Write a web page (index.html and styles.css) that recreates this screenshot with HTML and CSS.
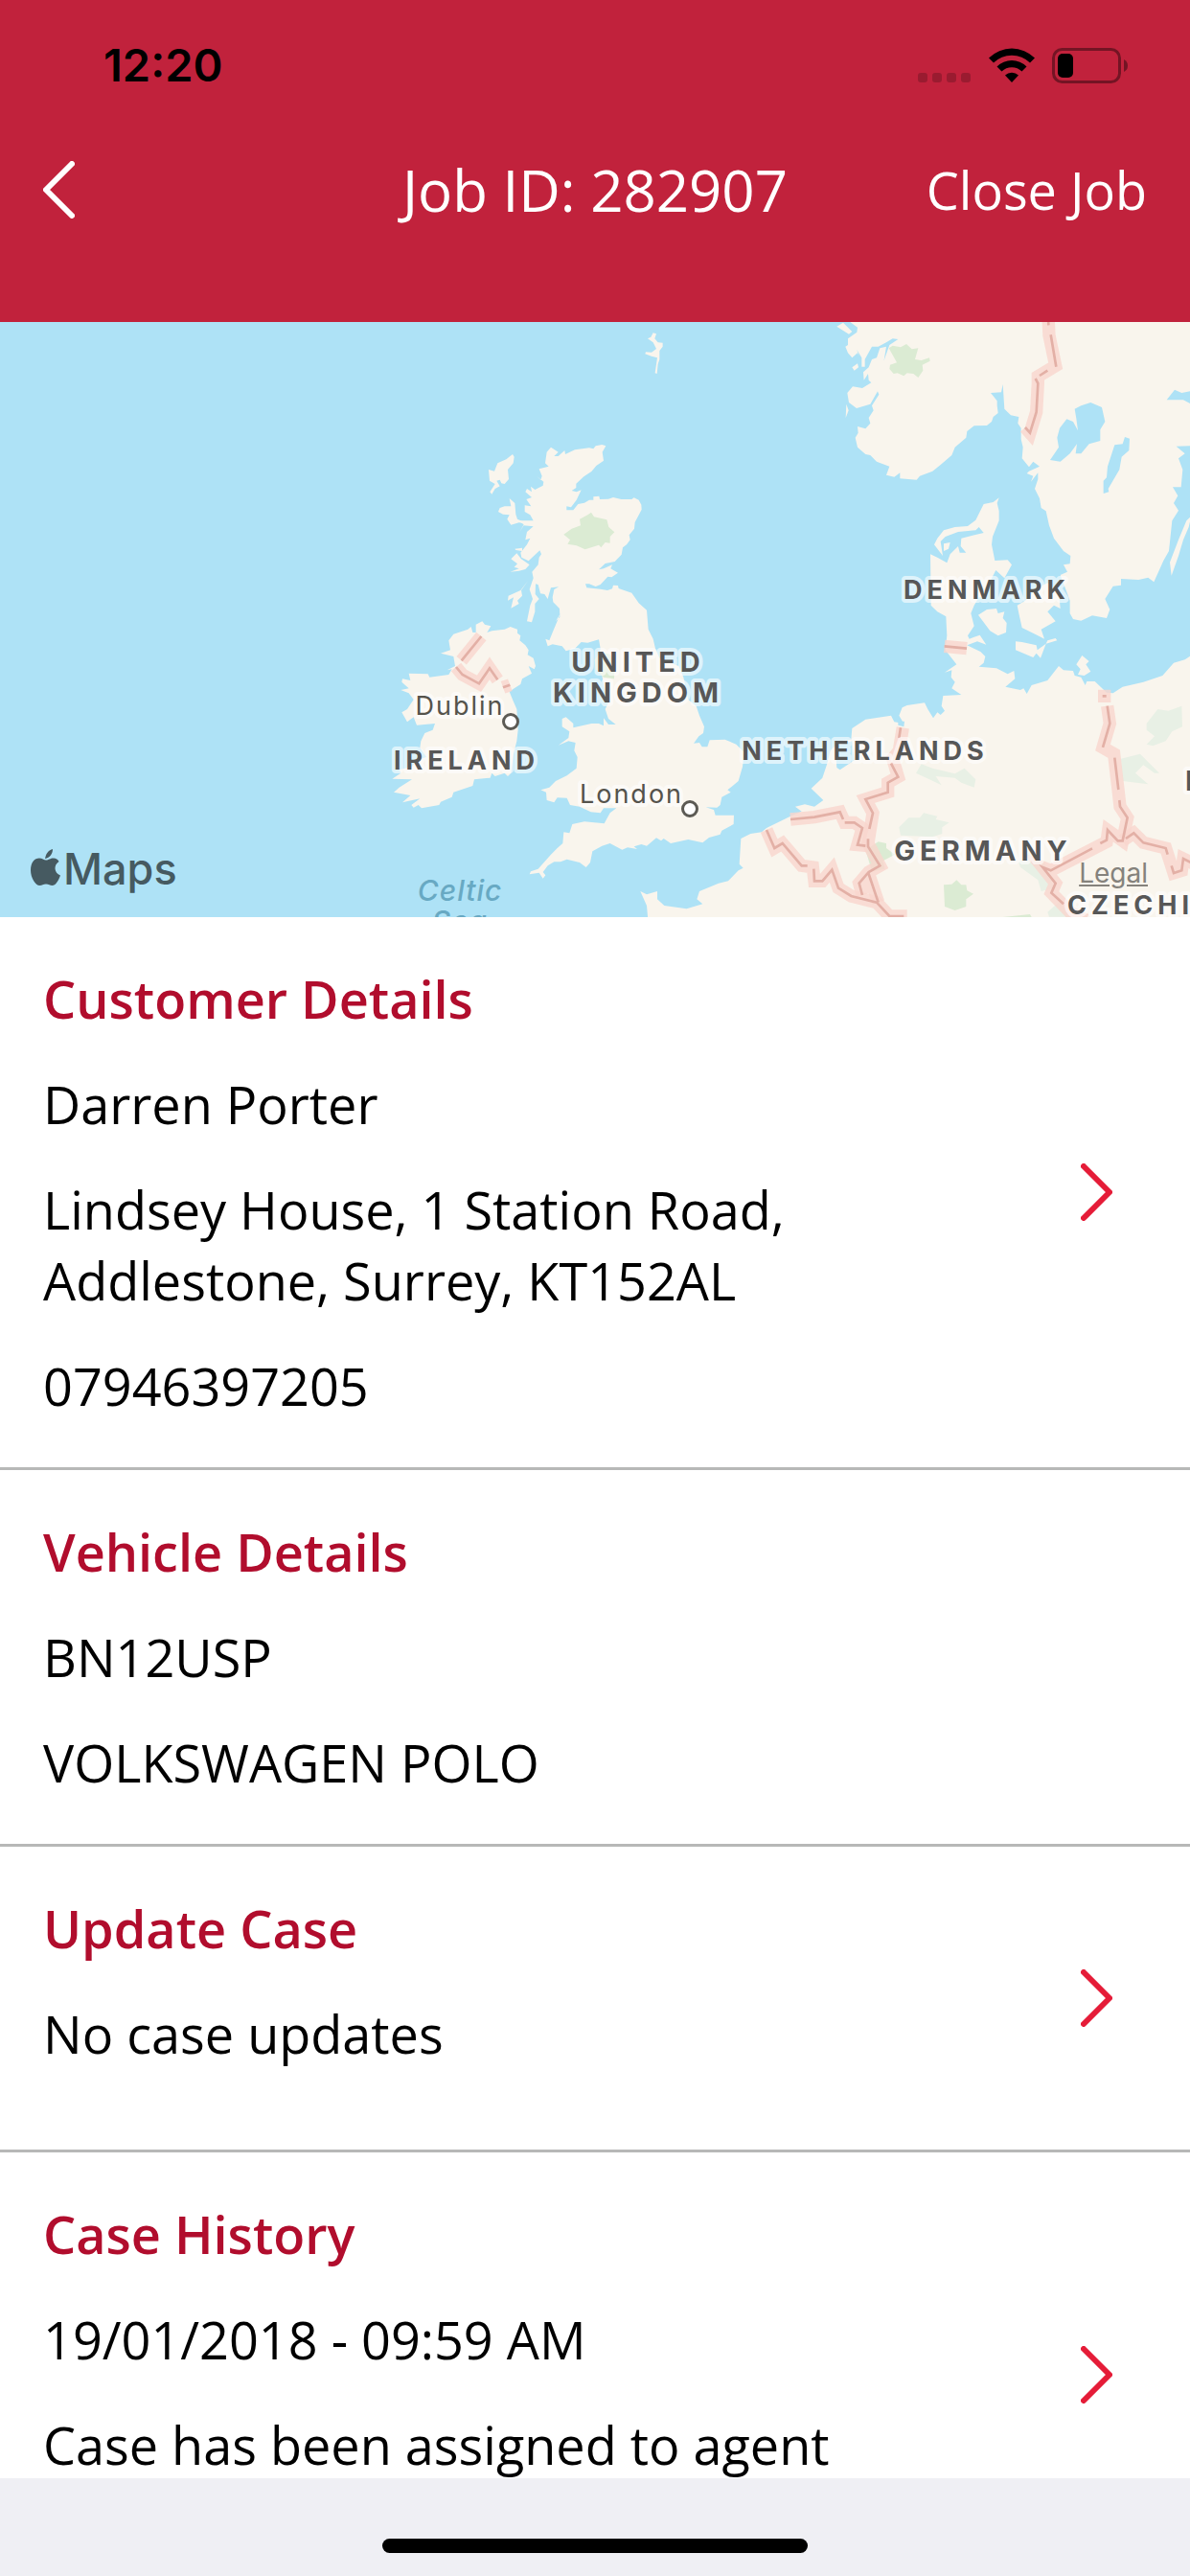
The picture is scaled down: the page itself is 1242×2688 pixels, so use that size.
FILE: index.html
```html
<!DOCTYPE html>
<html lang="en">
<head>
    <meta charset="utf-8">
    <meta name="viewport" content="width=device-width, initial-scale=1">
    <title>Job ID: 282907</title>
    <link rel="stylesheet" href="styles.css">
</head>
<body>
    <header class="header">
        <div class="status-bar">
            <span class="time">12:20</span>
            <div class="status-icons">
                <svg width="55" height="37" viewBox="0 0 55 37" fill="#000" fill-opacity=".2">
                    <rect x="0" y="26" width="10" height="10" rx="3"/>
                    <rect x="15" y="26" width="10" height="10" rx="3"/>
                    <rect x="30" y="26" width="10" height="10" rx="3"/>
                    <rect x="45" y="26" width="10" height="10" rx="3"/>
                </svg>
                <svg class="wifi" width="48" height="37" viewBox="0 0 48 37">
                    <path d="M0 10.5a34 34 0 0 1 48 0l-5 5a27 27 0 0 0-38 0z"/>
                    <path d="M8.500 19.500a22 22 0 0 1 31 0l-5 5a15 15 0 0 0-21 0z"/>
                    <path d="M17 28.500a10.500 10.500 0 0 1 14 0l-7 7.500z"/>
                </svg>
                <svg class="battery" width="80" height="37" viewBox="0 0 80 37">
                    <rect x="1.500" y="1.500" width="69" height="34" rx="9" fill="none" stroke="#000" stroke-opacity=".4" stroke-width="3"/>
                    <rect x="6" y="6" width="16" height="25" rx="5"/>
                    <path d="M75 12q4 2 4 6.500t-4 6.500z" fill-opacity=".4"/>
                </svg>
            </div>
        </div>
        <nav class="nav">
            <button class="back" aria-label="Back">
                <svg width="33" height="60" viewBox="0 0 33 60"><path d="M30 3L3 30l27 27"/></svg>
            </button>
            <h1 class="title">Job ID: 282907</h1>
            <button class="close-job">Close Job</button>
        </nav>
    </header>

    <div class="map">
        <svg class="map-canvas" viewBox="0 0 1242 621" preserveAspectRatio="xMidYMid slice">
            <!-- Britain and Ireland -->
            <g transform="translate(380 -6) scale(.33333)">
                <g class="land">
                    <path d="M585 410L608 425 595 438 608 438 628 420 630 432 660 418 705 412 718 415 725 406 745 402 757 406 746 425 750 452 727 468 712 486 688 502 664 524 664 537 650 546 665 550 680 544 665 575 648 598 634 595 634 607 655 607 670 588 690 584 705 575 718 575 718 565 736 563 738 573 765 572 780 567 805 573 838 573 845 568 860 575 868 590 869 605 848 645 846 665 830 685 833 700 822 715 810 724 806 746 785 768 755 774 735 793 750 790 777 778 772 790 795 803 775 817 763 815 740 840 725 846 705 838 693 838 697 850 740 854 762 858 777 853 780 842 795 843 797 852 838 866 860 898 885 920 890 980 905 1010 912 1040 925 1070 985 1095 1000 1130 1015 1200 1040 1220 1050 1250 1065 1285 1062 1305 1048 1315 1032 1337 1050 1335 1058 1348 1075 1348 1082 1327 1130 1325 1165 1340 1190 1365 1185 1410 1172 1455 1138 1483 1148 1490 1120 1505 1115 1530 1105 1538 1070 1537 1095 1545 1100 1562 1158 1562 1157 1590 1120 1610 1115 1622 1080 1632 1060 1648 1015 1638 960 1650 938 1635 930 1642 915 1633 885 1658 868 1653 845 1660 855 1668 825 1663 808 1670 770 1650 745 1658 715 1675 708 1710 695 1725 675 1710 635 1700 615 1708 595 1708 575 1720 560 1740 568 1750 560 1760 548 1742 518 1747 522 1738 545 1730 585 1685 605 1665 622 1650 625 1615 643 1618 652 1590 690 1582 752 1588 770 1555 790 1540 750 1540 740 1555 710 1552 675 1535 645 1530 635 1508 605 1507 595 1522 572 1515 570 1490 553 1483 580 1475 600 1455 635 1438 665 1415 668 1380 658 1360 662 1335 640 1330 608 1343 640 1320 643 1300 620 1285 620 1260 632 1255 655 1275 655 1288 712 1275 735 1275 750 1282 750 1258 765 1278 788 1278 765 1260 755 1230 765 1210 755 1180 745 1125 735 1090 740 1040 735 1012 700 1022 680 1020 660 1040 632 1048 620 1033 590 1027 575 1033 568 1010 580 1015 590 990 615 930 600 955 613 942 612 915 592 895 590 880 595 855 610 847 585 850 580 866 575 885 565 870 552 868 545 840 537 838 536 870 548 885 535 900 535 925 525 958 510 955 513 940 520 905 528 885 518 855 530 820 526 800 545 778 548 755 555 745 550 733 515 766 493 755 490 740 510 715 520 695 505 700 510 675 530 658 500 655 487 675 500 652 482 640 530 640 520 622 503 612 503 592 523 595 508 573 525 567 505 550 510 540 525 550 522 533 535 543 560 530 562 518 540 500 553 512 557 500 548 478 578 470 567 460 572 425z"/>
                    <path d="M465 432L470 440 467 460 450 480 453 510 440 525 430 523 425 512 415 515 425 532 410 540 400 557 394 550 410 525 393 515 390 480 408 485 418 460 445 448z"/>
                    <path d="M455 570L472 585 475 620 480 635 515 650 485 646 460 653 448 635 455 622 435 620 420 612 425 600 440 595 460 595z"/>
                    <path d="M478 742L492 760 518 778 505 792 485 797 458 800 485 790 470 785 480 775 460 760zM472 728L495 725 495 735 475 732z"/>
                    <path d="M514 827L492 858 495 875 480 890 485 900 460 914 468 880 450 890 452 875 490 858z"/>
                    <path d="M905 52L915 55 910 70 920 82 935 83 935 95 925 108 925 135 920 150 917 180 911 178 918 130 900 125 880 118 882 112 900 113 915 102 905 82 888 70 898 65z"/>
                    <path d="M370 955L378 965 397 970 385 990 400 985 440 980 458 972 480 980 480 992 490 1000 487 1015 505 1030 515 1045 512 1060 530 1070 537 1095 533 1105 515 1095 525 1118 495 1135 490 1152 470 1165 455 1175 465 1200 478 1230 482 1295 478 1330 468 1370 460 1430 450 1440 440 1430 410 1440 400 1430 395 1445 345 1450 340 1470 280 1490 275 1505 240 1520 235 1530 180 1540 170 1530 155 1538 148 1530 175 1510 120 1522 145 1500 93 1490 110 1475 150 1450 88 1448 115 1430 110 1420 150 1410 165 1390 195 1380 175 1350 178 1330 190 1305 215 1295 222 1275 165 1280 155 1255 135 1270 118 1240 135 1230 155 1200 140 1180 115 1170 140 1165 118 1145 120 1135 145 1140 140 1118 200 1120 205 1130 265 1122 275 1105 260 1108 285 1095 280 1065 240 1055 270 1045 265 1015 280 995 325 980 335 972 340 990 350 990 350 965z"/>
                </g>
                <path class="park" d="M711 614L720 628 760 637 766 660 784 676 770 690 770 710 755 708 742 724 735 716 692 730 665 718 637 713 645 700 625 683 650 665 678 655 675 635 700 622zM740 1050L770 1058 785 1085 783 1135 750 1130 725 1105 722 1075z"/>
                <g class="border">
                    <path d="M367 1002L305 1078M288 1098L308 1122 360 1150 393 1102 418 1138M435 1162L457 1154"/>
                </g>
                <g class="border-line">
                    <path d="M367 1002L305 1078M288 1098L308 1122 360 1150 393 1102 418 1138M435 1162L457 1154"/>
                </g>
            </g>

            <!-- Scandinavia and the continent -->
            <g transform="translate(800 -6) scale(.33333)">
                <g class="land">
                    <path d="M262 -10L262 18 285 35 283 50 255 70 255 90 247 95 255 115 268 130 285 115 290 125 283 105 298 130 298 158 308 158 308 135 330 95 350 95 375 82 395 70 412 72 385 90 368 138 375 95 355 100 345 130 330 135 320 160 303 175 305 200 318 180 320 200 328 208 300 225 270 220 253 240 258 270 282 288 325 275 348 235 352 245 330 280 335 295 320 318 325 335 310 352 285 345 287 365 278 380 285 410 310 432 325 435 345 455 385 470 375 497 400 503 418 490 418 508 470 512 480 500 520 485 545 465 580 435 590 410 625 380 628 360 650 343 690 342 705 330 710 315 725 303 722 280 722 265 702 240 735 238 740 213 745 290 765 310 790 315 787 335 797 350 797 385 803 410 800 445 822 472 835 455 855 470 822 485 815 492 835 500 828 518 850 490 850 510 840 540 855 570 860 600 875 610 885 655 900 695 930 735 952 750 950 775 930 778 942 800 920 810 935 850 950 890 950 930 960 948 985 953 1020 937 1065 945 1075 918 1060 885 1085 845 1110 842 1110 822 1165 825 1195 818 1213 832 1243 765 1260 735 1270 640 1290 608 1275 585 1288 562 1272 535 1298 535 1303 480 1290 445 1310 430 1283 407 1340 405 1340 -10z"/>
                    <path d="M220 32L240 20 268 48 258 56zM268 160L285 148 288 160 275 170zM250 275L257 295 248 318z"/>
                    <path d="M1330 625L1322 660 1305 700 1290 750 1268 812 1263 770 1290 700 1315 640z"/>
                    <path d="M728 568L722 585 728 610 728 640 708 690 705 715 715 765 755 763 768 778 745 820 718 795 700 830 690 850 680 880 665 880 650 905 640 930 650 970 630 1000 635 1010 668 998 688 1028 660 1018 628 1030 670 1050 685 1065 680 1085 665 1097 720 1102 755 1120 775 1110 778 1135 748 1160 795 1170 805 1165 815 1182 830 1155 880 1140 915 1095 930 1108 960 1110 965 1125 985 1130 998 1155 1003 1143 1028 1143 1065 1178 1085 1180 1115 1160 1180 1145 1240 1125 1275 1085 1310 1075 1340 1055 1340 1900 -370 1900 -375 1845 -395 1800 -375 1810 -342 1800 -342 1825 -320 1845 -250 1855 -200 1840 -218 1825 -210 1800 -150 1775 -120 1768 -88 1735 -73 1727 -85 1715 -80 1635 -50 1620 -15 1615 0 1602 75 1565 110 1550 90 1535 120 1528 150 1535 178 1515 140 1478 175 1445 190 1400 200 1360 230 1330 265 1325 268 1290 310 1262 390 1250 400 1270 430 1275 415 1250 425 1225 440 1218 495 1210 505 1230 522 1258 535 1240 545 1248 558 1235 548 1220 553 1188 610 1185 580 1165 590 1145 578 1130 580 1108 558 1115 595 1090 560 1045 565 1000 562 940 535 925 515 905 513 745 535 755 565 772 575 745 600 720 605 740 625 740 608 720 610 695 680 678 665 660 655 670 600 675 560 690 545 705 552 750 525 715 535 695 555 670 590 660 630 657 655 638 680 588 710 582z"/>
                    <path d="M555 712L575 708 570 728 555 735zM663 935L690 918 720 915 725 930 745 925 740 945 752 960 750 990 725 1000 700 985zM785 905L810 890 850 850 880 835 915 860 920 915 900 905 880 925 905 955 860 980 870 1010 850 1000 800 975 790 930z"/>
                    <path d="M780 1018L800 1020 845 1030 848 1045 875 1025 858 1070 845 1055 835 1068 780 1045zM880 1015L905 1008 910 1015 875 1025zM988 1062L1010 1080 1000 1090 1015 1112 995 1125 975 1122 983 1105 970 1090z"/>
                </g>
                <g class="water">
                    <path d="M1253 262L1278 230 1300 240 1340 232 1340 280 1305 262z"/>
                    <path d="M965 290L985 280 1015 270 1050 285 1060 330 1045 355 1045 390 1010 400 985 430 968 430 972 400 950 430 920 455 888 450 915 410 910 380 918 350 940 322 960 330 975 358 970 320z"/>
                    <path d="M1122 378L1137 383 1135 420 1112 440 1105 480 1070 540 1072 550 1055 555 1055 515 1065 505 1068 470 1090 403 1115 400z"/>
                    <path d="M235 1340L268 1330 275 1390 230 1420 220 1413 215 1345zM412 1268L432 1268 430 1285 412 1280z"/>
                </g>
                <path class="park" d="M383 100L395 92 420 97 438 87 455 103 475 100 465 135 485 138 510 130 512 140 488 152 490 170 475 192 460 180 440 178 430 187 410 178 398 180 385 165 387 152 408 145zM555 1780L580 1778 595 1765 610 1780 625 1780 628 1798 648 1808 625 1825 625 1848 590 1860 558 1848zM310 1670L350 1645 375 1650 375 1665 402 1685 365 1705 370 1730 330 1738zM740 1881L825 1872 830 1881z"/>
                <path class="forest" d="M468 1430L485 1402 520 1415 590 1432 620 1415 655 1450 650 1475 610 1460 590 1445 530 1440 548 1468 510 1450zM415 1600L445 1570 480 1570 492 1555 535 1565 530 1575 572 1585 550 1600 550 1620 520 1630 420 1625zM1190 1275L1225 1230 1258 1235 1300 1220 1302 1285 1270 1300 1250 1330 1210 1345 1190 1340 1215 1315 1190 1295zM1110 1385L1170 1370 1230 1430 1215 1430 1180 1405 1155 1430 1195 1465 1115 1455zM790 1710L825 1675 870 1710 900 1790 860 1800 850 1765 795 1725zM880 1865L920 1830 950 1880 885 1880z"/>
                <g class="border">
                    <path d="M882 0L885 60 905 155 850 188 850 210 845 300 825 365 810 348"/>
                    <path d="M557 1033L627 1040M1038 1189L1078 1189" />
                    <path d="M427 1288L415 1360 395 1385 412 1442 380 1460 380 1490 310 1512 333 1555 318 1650 355 1720 320 1740 290 1775 300 1812M318 1740L350 1835"/>
                    <path d="M75 1575L150 1568 230 1552 245 1585 275 1585 300 1602 285 1655 318 1658"/>
                    <path d="M0 1608L25 1665 50 1650 110 1720 145 1725 150 1768 175 1768 205 1733 225 1790 265 1815 345 1835 385 1878 440 1878"/>
                    <path d="M1067 1220L1075 1275 1053 1350 1088 1370 1102 1490 1107 1535 1130 1570 1115 1642 1070 1610 1065 1645 890 1735 865 1725 905 1775 892 1805 950 1865 1000 1890"/>
                    <path d="M1115 1642L1150 1618 1180 1648 1250 1665 1275 1743 1300 1735 1305 1698 1340 1715"/>
                </g>
                <g class="border-line">
                    <path d="M882 0L883 28M890 58L907 158M880 170L855 186M842 195L850 210 845 300 825 365 810 348"/>
                    <path d="M557 1033L627 1040M1052 1189L1064 1189"/>
                    <path d="M420 1288L415 1320M390 1400L412 1442 380 1460 380 1490 310 1512 333 1555 322 1605M318 1636L318 1660 355 1720 320 1740 290 1775 300 1812M318 1740L350 1835"/>
                    <path d="M75 1575L150 1568 230 1552 240 1575M245 1585L275 1585 300 1602 285 1655 310 1658"/>
                    <path d="M0 1608L25 1665 50 1650 110 1720 128 1720M148 1730L150 1768 175 1768 205 1733 225 1790 265 1815 345 1835 385 1878 430 1878"/>
                    <path d="M1067 1220L1075 1275 1053 1350M1090 1382L1102 1482M1105 1515L1107 1535 1130 1570 1115 1642 1100 1642 1068 1608 1065 1640 1045 1650M1020 1666L890 1735 865 1725 905 1775 892 1805 930 1840"/>
                    <path d="M1125 1635L1150 1618 1180 1648 1250 1665 1256 1685M1268 1720L1275 1743 1300 1735 1305 1698 1340 1715"/>
                </g>
            </g>

            <g class="country">
                <text x="666" y="365" font-size="29">UNITED</text>
                <text x="666" y="397" font-size="29">KINGDOM</text>
                <text x="1026" y="562" font-size="29">GERMANY</text>
                <text x="487" y="467" font-size="27">IRELAND</text>
                <text x="903" y="457" font-size="27">NETHERLANDS</text>
                <text x="1030" y="289" font-size="27">DENMARK</text>
                <text x="1114" y="618" font-size="27" text-anchor="start">CZECHIA</text>
                <text x="1237" y="489" font-size="29" text-anchor="start">POLAND</text>
            </g>
            <g class="city">
                <text x="480" y="410">Dublin</text>
                <text x="659" y="502">London</text>
                <circle cx="533" cy="417" r="7.500"/>
                <circle cx="720" cy="508" r="7.500"/>
            </g>
            <g class="sea">
                <text x="480" y="604">Celtic</text>
                <text x="480" y="636">Sea</text>
            </g>
        </svg>
        <div class="map-logo">
            <svg width="31" height="39" viewBox="0 0 31 39">
                <path d="M15 10C16 4 19 1 23 0c0 5-3 9-8 10z"/>
                <path d="M16 11.500c3 0 4-2 8-2 2.500 0 4.500 1.500 5.500 3.500-6 4-5 12 1.500 14.500-2 5.500-5 10.500-8.500 10.500-2.500 0-3.500-1.500-6.500-1.500s-4 1.500-6.500 1.500C5 38 0 30 0 22 0 14 4 9.500 9 9.500c3 0 5 2 7 2z"/>
            </svg>
            <span>Maps</span>
        </div>
        <a class="legal" href="#">Legal</a>
    </div>

    <main class="details">
        <section class="row">
            <div class="row-text">
                <h2>Customer Details</h2>
                <p>Darren Porter</p>
                <p>Lindsey House, 1 Station Road,<br>Addlestone, Surrey, KT152AL</p>
                <p>07946397205</p>
            </div>
            <button class="arrow" aria-label="Customer Details">
                <svg width="33" height="60" viewBox="0 0 33 60"><path d="M3 3l27 27L3 57"/></svg>
            </button>
        </section>
        <section class="row">
            <div class="row-text">
                <h2>Vehicle Details</h2>
                <p>BN12USP</p>
                <p>VOLKSWAGEN POLO</p>
            </div>
        </section>
        <section class="row row-update">
            <div class="row-text">
                <h2>Update Case</h2>
                <p>No case updates</p>
            </div>
            <button class="arrow" aria-label="Update Case">
                <svg width="33" height="60" viewBox="0 0 33 60"><path d="M3 3l27 27L3 57"/></svg>
            </button>
        </section>
        <section class="row row-history">
            <div class="row-text">
                <h2>Case History</h2>
                <p>19/01/2018 - 09:59 AM</p>
                <p>Case has been assigned to agent</p>
            </div>
            <button class="arrow" aria-label="Case History">
                <svg width="33" height="60" viewBox="0 0 33 60"><path d="M3 3l27 27L3 57"/></svg>
            </button>
        </section>
    </main>

    <footer class="home-bar">
        <div class="home-indicator"></div>
    </footer>
</body>
</html>
```
FILE: styles.css
```css
* {
    box-sizing: border-box;
}
body {
    margin: 0;
    height: 100vh;
    display: flex;
    flex-direction: column;
    overflow: hidden;
    background: #fff;
    color: #000;
    font-family: "Open Sans", "Noto Sans", sans-serif;
    font-size: 54px;
    line-height: 74px;
}
h1, h2, p {
    margin: 0;
}
button {
    padding: 0;
    border: 0;
    background: none;
    color: inherit;
    font: inherit;
    cursor: pointer;
}
svg {
    display: block;
}

/* header */
.header {
    flex: none;
    padding-bottom: 72px;
    background: #c1223c;
    color: #fff;
}
.status-bar {
    display: flex;
    justify-content: space-between;
    align-items: center;
    height: 132px;
    padding: 4px 64px 0 108px;
    color: #000;
}
.time {
    font-family: Inter, sans-serif;
    font-size: 47px;
    font-weight: 600;
}
.status-icons {
    display: flex;
    align-items: center;
}
.wifi {
    margin: 0 18px 0 19px;
}
.nav {
    display: grid;
    grid-template-columns: 1fr auto 1fr;
    align-items: center;
    height: 132px;
    padding: 0 45px;
}
.back {
    justify-self: start;
}
.back path, .arrow path {
    fill: none;
    stroke: #fff;
    stroke-width: 6;
    stroke-linecap: round;
    stroke-linejoin: round;
}
.title {
    font-size: 60px;
    font-weight: 400;
    line-height: 82px;
}
.close-job {
    justify-self: end;
}

/* map */
.map {
    position: relative;
    flex: none;
    height: 621px;
    overflow: hidden;
    background: #aee2f6;
    font-family: Inter, sans-serif;
}
.map-canvas {
    width: 100%;
    height: 100%;
}
.land {
    fill: #f9f5ed;
}
.water {
    fill: #aee2f6;
}
.park {
    fill: #dbebd3;
}
.forest {
    fill: #e8f0e5;
}
.border {
    fill: none;
    stroke: #f9d6cd;
    stroke-opacity: .8;
    stroke-width: 40;
}
.border-line {
    fill: none;
    stroke: #e3b0a6;
    stroke-width: 8;
}
.country text, .city text {
    text-anchor: middle;
    paint-order: stroke;
    stroke: #fff;
    stroke-opacity: .6;
    stroke-width: 8px;
    stroke-linejoin: round;
}
.country text {
    fill: #575757;
    font-weight: 700;
    letter-spacing: 5px;
}
.country text[text-anchor="start"] {
    text-anchor: start;
}
.city text {
    fill: #55534c;
    font-size: 27px;
    letter-spacing: 2px;
}
.city circle {
    fill: #fff;
    stroke: #5c5a54;
    stroke-width: 3;
}
.sea text {
    fill: #68a9c3;
    font-size: 30px;
    font-style: italic;
    font-weight: 500;
    letter-spacing: 1px;
    text-anchor: middle;
}
.map-logo {
    position: absolute;
    left: 32px;
    bottom: 20px;
    display: flex;
    align-items: center;
    gap: 3px;
    color: #465a61;
    fill: #465a61;
    font-size: 45px;
    font-weight: 500;
    line-height: 60px;
}
.map-logo svg {
    margin-bottom: 4px;
}
.legal {
    position: absolute;
    right: 44px;
    bottom: 26px;
    color: #85827c;
    font-size: 28px;
    line-height: 40px;
}

/* details */
.details {
    flex: 1;
    min-height: 0;
    overflow: hidden;
}
.row {
    display: flex;
    align-items: center;
    gap: 48px;
    padding: 48px 81px 48px 45px;
    border-bottom: 3px solid #b7b8b7;
}
.row-update {
    padding-bottom: 84px;
}
.row-history {
    padding-bottom: 122px;
}
.row-text {
    flex: 1;
    display: flex;
    flex-direction: column;
    gap: 36px;
}
.row h2 {
    color: #b10d2d;
    font-size: 54px;
    font-weight: 600;
}
/* arrow is centred on the whole row, not on the padded text */
.arrow {
    flex: none;
}
.row-update .arrow {
    margin-bottom: -36px;
}
.row-history .arrow {
    margin-bottom: -74px;
}
.arrow path {
    stroke: #e51c38;
}

/* home bar */
.home-bar {
    flex: none;
    display: flex;
    justify-content: center;
    align-items: flex-end;
    height: 102px;
    padding-bottom: 24px;
    background: #efeff4;
}
.home-indicator {
    width: 444px;
    height: 15px;
    border-radius: 8px;
    background: #000;
}
```
